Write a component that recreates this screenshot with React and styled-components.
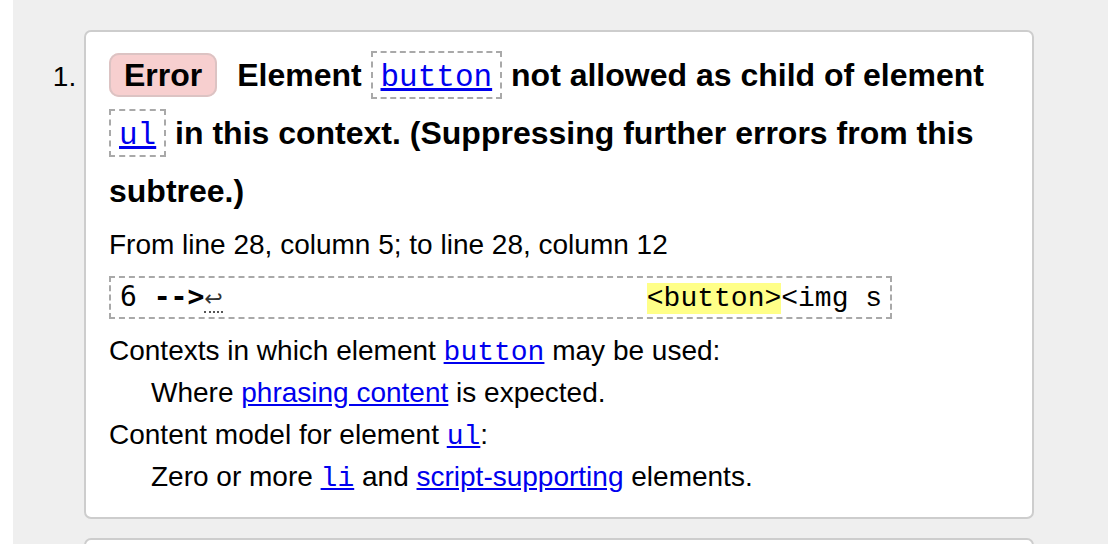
import React from "react";
import styled, { createGlobalStyle } from "styled-components";

const GlobalStyle = createGlobalStyle`
  body {
    margin: 0;
    background: #fff;
    font-family: "Liberation Sans", Arial, Helvetica, sans-serif;
    color: #000;
  }
`;

const Main = styled.main`
  margin-left: 13px;
  min-height: 100vh;
  background: #efefef;
  padding-top: 30px;
  box-sizing: border-box;
`;

const Results = styled.ol`
  margin: 0;
  padding: 0 0 0 71px;
  list-style: decimal;
`;

const Message = styled.li`
  box-sizing: border-box;
  width: 950px;
  margin-bottom: 19px;
  padding: 14px 23px 19px 23px;
  background: #fff;
  border: 2px solid #cdcdcd;
  border-radius: 7px;
  font-size: 28px;
  line-height: 42px;

  &::marker {
    font-family: "Liberation Sans", Arial, sans-serif;
    font-size: 28px;
  }
`;

const Heading = styled.p`
  margin: 0;
  font-size: 32px;
  line-height: 58px;
  font-weight: bold;
`;

const Badge = styled.strong`
  display: inline;
  padding: 2px 13px;
  margin-right: 11px;
  background: #f7cfcf;
  border: 2px solid #dcc3c3;
  border-radius: 10px;
`;

const Code = styled.code`
  font-family: "Liberation Mono", "Courier New", monospace;
  font-weight: normal;
  font-size: ${(p) => p.size || 28}px;
  line-height: 1;
`;

const CodeBox = styled.span`
  padding: 4px 8px;
  border: 2px dashed #a9a9a9;
`;

const Link = styled.a`
  color: #0000ee;
  text-decoration: underline;
`;

const Location = styled.p`
  margin: 4px 0 0;
`;

const Extract = styled.p`
  display: inline-block;
  margin: 10px 0 0;
  padding: 2px 8px 2px 9px;
  border: 2px dashed #a9a9a9;
  font-family: "Liberation Mono", "Courier New", monospace;
  font-size: 28px;
  line-height: 33px;
  white-space: pre;
`;

const Gutter = styled.span`
  font-family: "DejaVu Sans Mono", monospace;
  font-size: 28px;
  font-weight: ${(p) => (p.bold ? "bold" : "normal")};
`;

const LineFeed = styled.span`
  font-family: "DejaVu Sans", sans-serif;
  font-size: 22px;
  color: #333;
  margin-right: 4px;
  border-bottom: 2px dotted #555;
`;

const Mark = styled.mark`
  background: #ffff88;
  color: #000;
`;

const Details = styled.dl`
  margin: 11px 0 0;
`;

const Term = styled.dt`
  margin: 0;
`;

const Desc = styled.dd`
  margin: 0 0 0 42px;
`;

export default function App() {
  return (
    <>
      <GlobalStyle />
      <Main>
        <Results>
          <Message>
            <Heading>
              <Badge>Error</Badge>{" "}
              Element{" "}
              <CodeBox>
                <Link href="#button">
                  <Code size={31}>button</Code>
                </Link>
              </CodeBox>{" "}
              not allowed as child of element{" "}
              <CodeBox>
                <Link href="#ul">
                  <Code size={31}>ul</Code>
                </Link>
              </CodeBox>{" "}
              in this context. (Suppressing further errors from this subtree.)
            </Heading>
            <Location>From line 28, column 5; to line 28, column 12</Location>
            <Extract>
              <Gutter>6 </Gutter>
              <Gutter bold>--&gt;</Gutter>
              <LineFeed>↩</LineFeed>
              {"                         "}
              <Mark>&lt;button&gt;</Mark>&lt;img s
            </Extract>
            <Details>
              <Term>
                Contexts in which element{" "}
                <Link href="#button">
                  <Code>button</Code>
                </Link>{" "}
                may be used:
              </Term>
              <Desc>
                Where <Link href="#phrasing">phrasing content</Link> is expected.
              </Desc>
              <Term>
                Content model for element{" "}
                <Link href="#ul">
                  <Code>ul</Code>
                </Link>
                :
              </Term>
              <Desc>
                Zero or more{" "}
                <Link href="#li">
                  <Code>li</Code>
                </Link>{" "}
                and <Link href="#script">script-supporting</Link> elements.
              </Desc>
            </Details>
          </Message>
          <Message>
            <Heading>
              <Badge>Error</Badge> Element{" "}
              <CodeBox>
                <Link href="#img">
                  <Code size={31}>img</Code>
                </Link>
              </CodeBox>{" "}
              is missing required attribute.
            </Heading>
          </Message>
        </Results>
      </Main>
    </>
  );
}
